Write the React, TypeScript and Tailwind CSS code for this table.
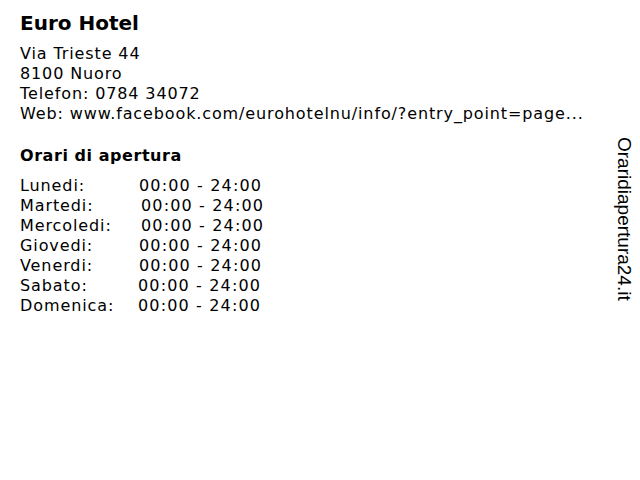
import React from 'react';

const hours = [
  { day: 'Lunedi:', time: '00:00 - 24:00', pad: 'pl-[119px]' },
  { day: 'Martedi:', time: '00:00 - 24:00', pad: 'pl-[121px]' },
  { day: 'Mercoledi:', time: '00:00 - 24:00', pad: 'pl-[121px]' },
  { day: 'Giovedi:', time: '00:00 - 24:00', pad: 'pl-[119px]' },
  { day: 'Venerdi:', time: '00:00 - 24:00', pad: 'pl-[119px]' },
  { day: 'Sabato:', time: '00:00 - 24:00', pad: 'pl-[118px]' },
  { day: 'Domenica:', time: '00:00 - 24:00', pad: 'pl-[118px]' },
];

export default function App() {
  return (
    <div className="w-[640px] h-[480px] bg-white text-black flex font-['DejaVu_Sans',sans-serif]">
      <div className="flex-1 flex flex-col pl-[20px] pt-[11px]">
        <h1 className="text-[20px] leading-[24px] font-bold">Euro Hotel</h1>
        <div className="mt-[9px] text-[16px] leading-[20px] tracking-[0.88px]">
          <p>Via Trieste 44</p>
          <p>8100 Nuoro</p>
          <p>Telefon: 0784 34072</p>
          <p className="whitespace-nowrap">Web: www.facebook.com/eurohotelnu/info/?entry_point=page...</p>
        </div>
        <h2 className="mt-[22px] text-[16px] leading-[20px] font-bold tracking-[0.55px]">Orari di apertura</h2>
        <div className="mt-[10px] text-[16px] leading-[20px]">
          {hours.map((h) => (
            <div key={h.day} className="flex">
              <span className="w-0 whitespace-nowrap tracking-[0.9px]">{h.day}</span>
              <span className={`whitespace-nowrap tracking-[1.15px] ${h.pad}`}>{h.time}</span>
            </div>
          ))}
        </div>
      </div>
      <div className="pt-[137px] pr-[6px]">
        <span className="[writing-mode:vertical-rl] text-[19px] leading-[20px] font-['Liberation_Sans',Arial,sans-serif]">
          Oraridiapertura24.it
        </span>
      </div>
    </div>
  );
}
